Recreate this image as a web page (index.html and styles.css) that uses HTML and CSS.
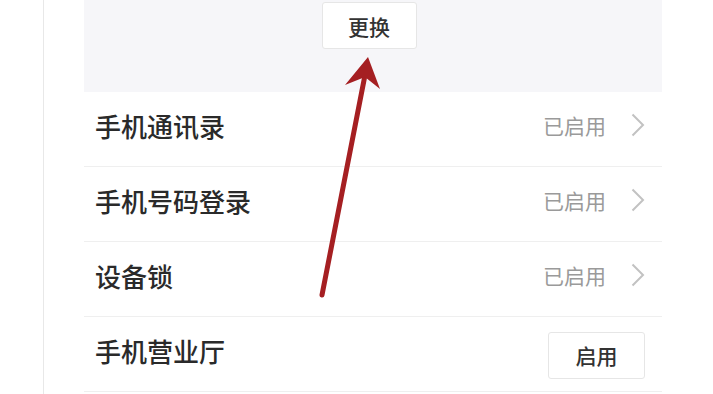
FILE: index.html
```html
<!DOCTYPE html>
<html lang="zh-CN">
<head>
<meta charset="utf-8">
<link rel="stylesheet" href="styles.css">
</head>
<body>
<div class="page">
  <div class="panel">
    <div class="header">
      <div class="btn change">更换</div>
    </div>
    <div class="row">
      <span class="label">手机通讯录</span>
      <span class="status">已启用<svg class="chev" width="14" height="24" viewBox="0 0 14 24"><polyline points="1.5,1.5 12,12 1.5,22.5" fill="none" stroke="#c2c2c2" stroke-width="2"/></svg></span>
    </div>
    <div class="row">
      <span class="label">手机号码登录</span>
      <span class="status">已启用<svg class="chev" width="14" height="24" viewBox="0 0 14 24"><polyline points="1.5,1.5 12,12 1.5,22.5" fill="none" stroke="#c2c2c2" stroke-width="2"/></svg></span>
    </div>
    <div class="row">
      <span class="label">设备锁</span>
      <span class="status">已启用<svg class="chev" width="14" height="24" viewBox="0 0 14 24"><polyline points="1.5,1.5 12,12 1.5,22.5" fill="none" stroke="#c2c2c2" stroke-width="2"/></svg></span>
    </div>
    <div class="row">
      <span class="label">手机营业厅</span>
      <div class="btn enable">启用</div>
    </div>
  </div>
  <svg class="arrow" width="713" height="394" viewBox="0 0 713 394">
    <line x1="322" y1="295" x2="366" y2="70" stroke="#a51f22" stroke-width="5" stroke-linecap="round"/>
    <polygon points="368,57 345,85 365,77 380,89" fill="#a51f22"/>
  </svg>
</div>
</body>
</html>
```
FILE: styles.css
```css
html, body {
  margin: 0;
  padding: 0;
  background: #ffffff;
}
.page {
  position: relative;
  width: 713px;
  height: 394px;
  overflow: hidden;
  font-family: "Noto Sans CJK SC", "Noto Sans", sans-serif;
}
.panel {
  margin-left: 43px;
  border-left: 1px solid #e8e8e8;
  padding-left: 40px;
  width: 578px;
  height: 394px;
}
.header {
  height: 92px;
  background: #f6f6f9;
  display: flex;
  justify-content: center;
  align-items: flex-start;
  padding-right: 8px;
  box-sizing: border-box;
}
.btn {
  background: #ffffff;
  border: 1px solid #e6e6e6;
  border-radius: 3px;
  box-sizing: border-box;
  display: flex;
  align-items: center;
  justify-content: center;
  color: #333;
  font-size: 21px;
  font-weight: 500;
}
.change {
  margin-top: 2px;
  width: 95px;
  height: 47px;
}
.row {
  height: 75px;
  border-bottom: 1px solid #efefef;
  box-sizing: border-box;
  display: flex;
  align-items: center;
  justify-content: space-between;
  padding-left: 11px;
  padding-right: 17px;
}
.label {
  font-size: 26px;
  font-weight: 500;
  color: #2a2a2a;
  margin-top: -8px;
}
.status {
  font-size: 21px;
  color: #9a9a9a;
  display: flex;
  align-items: center;
  margin-top: -8px;
}
.chev {
  display: block;
  margin-left: 25px;
}
.enable {
  width: 97px;
  height: 47px;
  margin-top: 2px;
}
.arrow {
  position: absolute;
  left: 0;
  top: 0;
}
```
